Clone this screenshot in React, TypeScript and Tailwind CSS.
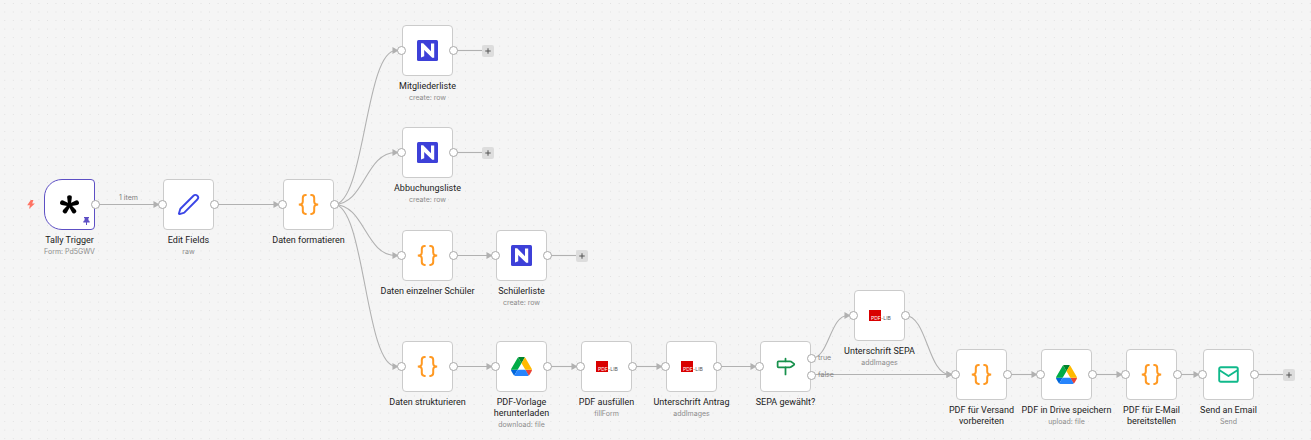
import type { ReactNode } from "react";
import { Milestone, Pen, Plus } from "lucide-react";

type IconName = "tally" | "pen" | "code" | "noco" | "drive" | "pdf" | "switch" | "mail";

type FlowNode = {
  id: string;
  x: number;
  y: number;
  icon: IconName;
  title: string;
  subtitle?: string;
  trigger?: boolean;
  branches?: string[];
  addNext?: boolean;
};

const nodes: FlowNode[] = [
  { id: "tally", x: 44, y: 179, icon: "tally", title: "Tally Trigger", subtitle: "Form: Pd5GWV", trigger: true },
  { id: "edit", x: 163, y: 179, icon: "pen", title: "Edit Fields", subtitle: "raw" },
  { id: "format", x: 283, y: 179, icon: "code", title: "Daten formatieren" },
  { id: "members", x: 402, y: 25, icon: "noco", title: "Mitgliederliste", subtitle: "create: row", addNext: true },
  { id: "debits", x: 402, y: 127, icon: "noco", title: "Abbuchungsliste", subtitle: "create: row", addNext: true },
  { id: "single", x: 402, y: 230, icon: "code", title: "Daten einzelner Schüler" },
  { id: "students", x: 496, y: 230, icon: "noco", title: "Schülerliste", subtitle: "create: row", addNext: true },
  { id: "structure", x: 402, y: 341, icon: "code", title: "Daten strukturieren" },
  { id: "template", x: 496, y: 341, icon: "drive", title: "PDF-Vorlage herunterladen", subtitle: "download: file" },
  { id: "fill", x: 581, y: 341, icon: "pdf", title: "PDF ausfüllen", subtitle: "fillForm" },
  { id: "sign", x: 666, y: 341, icon: "pdf", title: "Unterschrift Antrag", subtitle: "addImages" },
  { id: "sepa", x: 760, y: 341, icon: "switch", title: "SEPA gewählt?", branches: ["true", "false"] },
  { id: "signSepa", x: 854, y: 290, icon: "pdf", title: "Unterschrift SEPA", subtitle: "addImages" },
  { id: "prepare", x: 956, y: 349, icon: "code", title: "PDF für Versand vorbereiten" },
  { id: "save", x: 1041, y: 349, icon: "drive", title: "PDF in Drive speichern", subtitle: "upload: file" },
  { id: "mailPdf", x: 1126, y: 349, icon: "code", title: "PDF für E-Mail bereitstellen" },
  { id: "send", x: 1203, y: 349, icon: "mail", title: "Send an Email", subtitle: "Send", addNext: true },
];

const edges: { from: string; to: string; branch?: number }[] = [
  { from: "tally", to: "edit" },
  { from: "edit", to: "format" },
  { from: "format", to: "members" },
  { from: "format", to: "debits" },
  { from: "format", to: "single" },
  { from: "format", to: "structure" },
  { from: "single", to: "students" },
  { from: "structure", to: "template" },
  { from: "template", to: "fill" },
  { from: "fill", to: "sign" },
  { from: "sign", to: "sepa" },
  { from: "sepa", to: "signSepa", branch: 0 },
  { from: "sepa", to: "prepare", branch: 1 },
  { from: "signSepa", to: "prepare" },
  { from: "prepare", to: "save" },
  { from: "save", to: "mailPdf" },
  { from: "mailPdf", to: "send" },
];

const NODE_SIZE = 51;
const MIDDLE = NODE_SIZE / 2;
const findNode = (id: string) => nodes.find((node) => node.id === id)!;

function CodeIcon() {
  return (
    <svg width="21" height="21" viewBox="0 0 21 21" fill="none" stroke="#ff9922" strokeWidth="2">
      <path d="M8.6 1.1H7.6Q4.8 1.1 4.8 3.9V7.4Q4.8 10.5 .8 10.5Q4.8 10.5 4.8 13.6V17.1Q4.8 19.9 7.6 19.9H8.6" />
      <path d="M12.4 1.1H13.4Q16.2 1.1 16.2 3.9V7.4Q16.2 10.5 20.2 10.5Q16.2 10.5 16.2 13.6V17.1Q16.2 19.9 13.4 19.9H12.4" />
    </svg>
  );
}

function TallyIcon() {
  return (
    <svg width="21" height="21" viewBox="0 0 21 21" fill="#000">
      {[0, 72, 144, 216, 288].map((a) => (
        <path key={a} transform={`rotate(${a} 10.5 11)`} d="M9.3 12 8.2 3.6Q8 1.2 10.5 1.2T12.8 3.6L11.7 12z" />
      ))}
    </svg>
  );
}

function NocoIcon() {
  return (
    <svg width="21" height="21" viewBox="0 0 21 21">
      <rect width="21" height="21" rx="1.5" fill="#3d40d8" />
      <path d="M4 6 7.2 8.6V16.2L4 17.6z" fill="#fff" />
      <path d="M4 3.2H6.2L14 11.2V3.6H17.2V17.8H15.2L4 7z" fill="#fff" />
    </svg>
  );
}

function DriveIcon() {
  return (
    <svg width="21" height="19" viewBox="0 0 87.3 78">
      <path d="m6.6 66.85 3.85 6.65c.8 1.4 1.95 2.5 3.3 3.3l13.75-23.8h-27.5c0 1.55.4 3.1 1.2 4.5z" fill="#0066da" />
      <path d="m43.65 25-13.75-23.8c-1.35.8-2.5 1.9-3.3 3.3l-25.4 44a9.06 9.06 0 0 0 -1.2 4.5h27.5z" fill="#00ac47" />
      <path d="m73.55 76.8c1.35-.8 2.5-1.9 3.3-3.3l1.6-2.75 7.65-13.25c.8-1.4 1.2-2.95 1.2-4.5h-27.502l5.852 11.5z" fill="#ea4335" />
      <path d="m43.65 25 13.75-23.8c-1.35-.8-2.9-1.2-4.5-1.2h-18.5c-1.6 0-3.15.45-4.5 1.2z" fill="#00832d" />
      <path d="m59.8 53h-32.3l-13.75 23.8c1.35.8 2.9 1.2 4.5 1.2h50.8c1.6 0 3.15-.45 4.5-1.2z" fill="#2684fc" />
      <path d="m73.4 26.5-12.7-22c-.8-1.4-1.95-2.5-3.3-3.3l-13.75 23.8 16.15 28h27.45c0-1.55-.4-3.1-1.2-4.5z" fill="#ffba00" />
    </svg>
  );
}

function PdfIcon() {
  return (
    <svg className="overflow-visible" width="21" height="11" viewBox="0 0 21 11" fontFamily="Inter, sans-serif" fontSize="5">
      <rect width="12" height="11" fill="#d90000" />
      <text x="2" y="10" fill="#fff">PDF</text>
      <text x="12" y="10" fill="#555">-LIB</text>
    </svg>
  );
}

function MailIcon() {
  return (
    <svg width="21" height="17" viewBox="0 0 21 17" fill="none" stroke="#10b98b" strokeWidth="1.9" strokeLinejoin="round">
      <rect x="1.2" y="1.2" width="18.6" height="14.6" rx="1.6" />
      <path d="M1.6 4.2 10.5 10 19.4 4.2" />
    </svg>
  );
}

function BoltIcon() {
  return (
    <svg className="shrink-0" width="8" height="9" viewBox="0 0 8 9" fill="#ff7464">
      <path d="M3.8 0 .2 5.2h2.7L2 9 7.9 3.6H5.2L6.4 0z" />
    </svg>
  );
}

const icons: Record<IconName, ReactNode> = {
  tally: <TallyIcon />,
  pen: <Pen size={23} color="#3b46e6" strokeWidth={2} />,
  code: <CodeIcon />,
  noco: <NocoIcon />,
  drive: <DriveIcon />,
  pdf: <PdfIcon />,
  switch: <Milestone size={21} color="#17914c" strokeWidth={2} />,
  mail: <MailIcon />,
};

function Handle() {
  return <span className="size-[9px] shrink-0 rounded-full border border-[#a9a9a9] bg-white" />;
}

function Outputs({ node }: { node: FlowNode }) {
  if (node.branches) {
    return (
      <div className="-mr-[6px] flex w-[9px] flex-col gap-2 pt-px">
        {node.branches.map((branch) => (
          <div key={branch} className="flex h-[9px] items-center gap-[2px] text-[7px] text-[#858585]">
            <Handle />
            <span>{branch}</span>
          </div>
        ))}
      </div>
    );
  }
  return (
    <div className="-mr-[6px] flex w-[9px] items-center gap-6">
      <Handle />
      {node.addNext && (
        <button
          type="button"
          aria-label={`Add after ${node.title}`}
          className="flex size-3 shrink-0 items-center justify-center rounded-[2px] bg-[#dddddd] text-[#555]"
        >
          <Plus size={8} strokeWidth={3} />
        </button>
      )}
    </div>
  );
}

function NodeCard({ node }: { node: FlowNode }) {
  return (
    <div className="absolute w-[51px]" style={{ left: node.x, top: node.y }}>
      <div
        className={`relative flex h-[51px] items-center justify-between border bg-white ${
          node.trigger ? "rounded-l-[18px] rounded-r-[4px] border-[#5d4fc4]" : "rounded-[4px] border-[#cbcbcb]"
        }`}
      >
        {node.trigger ? (
          <div className="-ml-[18px] w-[21px]">
            <BoltIcon />
          </div>
        ) : (
          <div className="-ml-[6px] flex">
            <Handle />
          </div>
        )}
        {icons[node.icon]}
        <Outputs node={node} />
        {node.trigger && (
          <svg className="absolute right-1 bottom-1" width="7" height="8" viewBox="0 0 7 8" fill="#5d4fc4">
            <path d="M1 0h5v1.1H5.4v2.2Q6.8 3.9 6.8 5.4H4V8H3V5.4H.2Q.2 3.9 1.6 3.3V1.1H1z" />
          </svg>
        )}
      </div>
      <div className="-mx-[26px] pt-[5px] text-center">
        <p className="font-[Roboto,sans-serif] text-[9px] leading-[11px] text-[#222]">{node.title}</p>
        {node.subtitle && <p className="text-[7px] leading-[12px] text-[#8c8c8c]">{node.subtitle}</p>}
      </div>
    </div>
  );
}

function Edges() {
  return (
    <svg className="absolute inset-0 size-full" fill="none" stroke="#b1b1b1" strokeWidth="1.1">
      <defs>
        <pattern id="dots" width="16" height="16" patternUnits="userSpaceOnUse" patternTransform="translate(.5 -.8) scale(.5333)">
          <circle cx="8" cy="8" r="1" fill="#dcdcdc" stroke="none" />
        </pattern>
      </defs>
      <rect width="100%" height="100%" fill="url(#dots)" stroke="none" />
      {edges.map(({ from, to, branch }) => {
        const source = findNode(from);
        const target = findNode(to);
        const x1 = source.x + NODE_SIZE;
        const y1 = source.y + (branch === undefined ? MIDDLE : 17.5 + branch * 16);
        const x2 = target.x;
        const y2 = target.y + MIDDLE;
        const end = x2 - 6;
        const mid = (x1 + end) / 2;
        return (
          <g key={`${from}-${to}`}>
            <path d={`M${x1} ${y1}C${mid} ${y1} ${mid} ${y2} ${end} ${y2}`} />
            <path d={`M${x2 - 9} ${y2 - 2.5}l4.5 2.5-4.5 2.5z`} fill="#b1b1b1" />
          </g>
        );
      })}
      {nodes
        .filter((node) => node.addNext)
        .map((node) => (
          <path key={node.id} d={`M${node.x + NODE_SIZE} ${node.y + MIDDLE}h29`} />
        ))}
    </svg>
  );
}

export default function App() {
  return (
    <main className="relative min-h-screen w-full overflow-hidden bg-[#f5f5f5] font-[Inter,sans-serif]">
      <Edges />
      <span className="absolute top-[192px] left-[119px] text-[7px] leading-[11px] text-[#7d7d7d]">1 item</span>
      {nodes.map((node) => (
        <NodeCard key={node.id} node={node} />
      ))}
    </main>
  );
}
